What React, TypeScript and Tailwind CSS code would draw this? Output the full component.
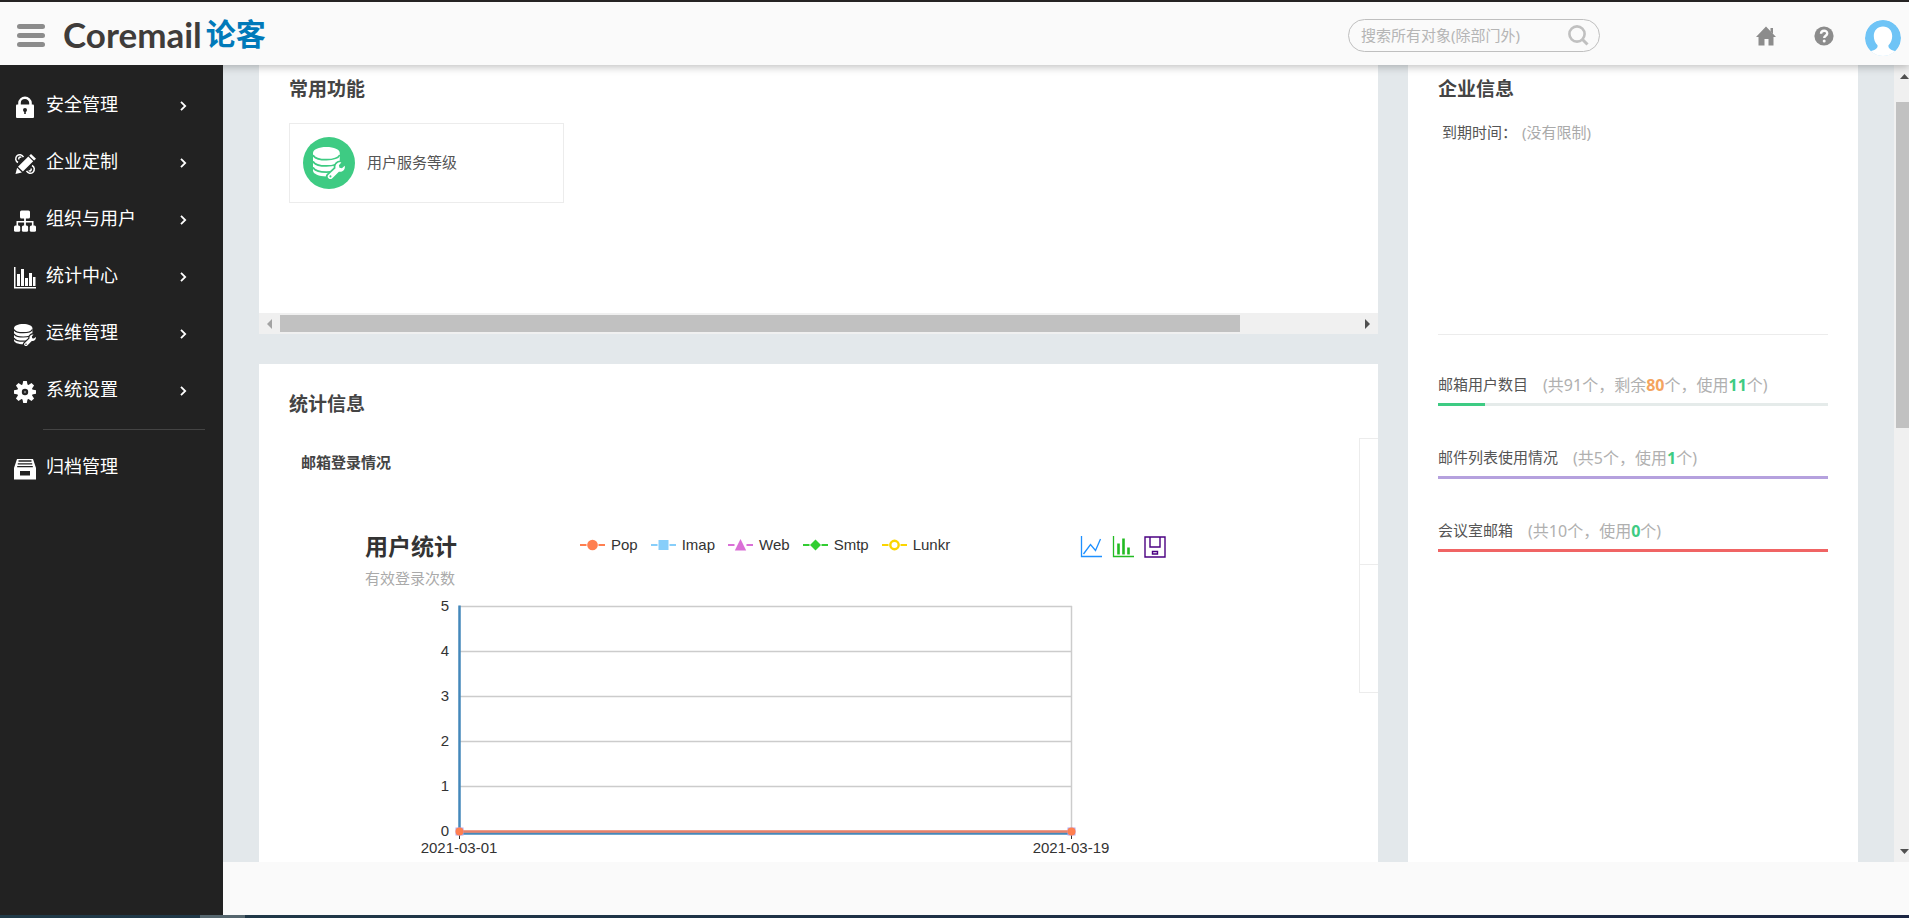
import type { ReactNode } from "react";

function LockIcon() {
  return (
    <svg viewBox="0 0 22 22" className="size-[22px]" fill="none">
      <path d="M5.500 9V7a5.500 5.200 0 0 1 11 0v2" stroke="#fff" strokeWidth="2.600" />
      <rect x="2" y="8.500" width="18" height="13.500" rx="1" fill="#fff" />
      <circle cx="11" cy="14" r="2" fill="#222" />
      <path d="M10.200 14.500h1.600V18h-1.600z" fill="#222" />
    </svg>
  );
}

function DesignIcon() {
  return (
    <svg viewBox="0 0 22 22" className="size-[22px]" fill="none">
      <path d="M9.500 4.200C8 1.500 5 1 3 2.800 1 5 1.300 8 4 9.500M5 6.500c-.8-1.800.8-3 2.300-2" stroke="#fff" strokeWidth="1.500" />
      <path d="M12.500 17.800c1.500 2.700 4.500 3.200 6.500 1.400 2-2.200 1.700-5.200-1-6.700M17 15.500c.8 1.800-.8 3-2.300 2" stroke="#fff" strokeWidth="1.500" />
      <path d="M1.500 21l1.600-6.300 4.800 4.700zM4 13.800L14.300 3.500l4.900 4.800L8.900 18.600zM15.200 2.700L17 1l5 4.800-1.900 1.700z" fill="#fff" />
    </svg>
  );
}

function OrgIcon() {
  return (
    <svg viewBox="0 0 22 22" className="size-[22px]" fill="#fff">
      <rect x="6" y="0.500" width="10" height="8" rx="1.500" />
      <path d="M2.500 16v-5h7.600V8h1.800v3h7.600v5h-1.600v-3.400h-6V16h-1.800v-3.400h-6V16z" />
      <rect x="0" y="15.500" width="6.200" height="6.200" rx="1.500" />
      <rect x="7.900" y="15.500" width="6.200" height="6.200" rx="1.500" />
      <rect x="15.800" y="15.500" width="6.200" height="6.200" rx="1.500" />
    </svg>
  );
}

function StatsIcon() {
  return (
    <svg viewBox="0 0 22 22" className="size-[22px]" fill="#fff">
      <path d="M0 0h1.500v20H22v1.500H0z" />
      <path d="M3 7h3v12H3zM7 2h3v17H7zM11 11h3v8h-3zM15 6h3v13h-3zM19 10h2.500v9H19z" />
    </svg>
  );
}

function DatabaseIcon({ cut, className }: { cut: string; className: string }) {
  return (
    <svg viewBox="0 0 22 22" className={className}>
      <path d="M0 4.200C0 1.700 4 0 9.200 0s9.200 1.700 9.200 4.200v12c0 2.400-4 4-9.200 4s-9.200-1.600-9.200-4z" fill="#fff" />
      <g stroke={cut} strokeWidth="1.200" fill="none">
        <path d="M0 5.500c1 2.200 4.600 3.200 9.200 3.200s8.200-1 9.200-3.200" />
        <path d="M0 9.800c1 2.200 4.600 3.200 9.200 3.200s8.200-1 9.200-3.200" />
        <path d="M0 14c1 2.200 4.600 3.200 9.200 3.200s8.200-1 9.200-3.200" />
      </g>
      <path
        d="M10.500 19.200l5-4.600c-.5-2.400 1.400-4.400 4-4l-1.700 2 .4 1.600 1.700.4 1.900-1.700c.6 2.600-1.500 4.600-4 4.100l-4.700 4.700c-1.700 1.300-4-.8-2.600-2.500z"
        fill="#fff"
        stroke={cut}
        strokeWidth="2.400"
        paintOrder="stroke"
      />
      <circle cx="12" cy="20.200" r="0.700" fill={cut} />
    </svg>
  );
}

function GearIcon() {
  return (
    <svg viewBox="0 0 22 22" className="size-[22px]">
      <g fill="#fff">
        <circle cx="11" cy="11" r="7.800" />
        {[0, 45, 90, 135].map((a) => (
          <path key={a} d="M9.200 0h3.600l.8 4v14l-.8 4H9.200l-.8-4V4z" transform={`rotate(${a} 11 11)`} />
        ))}
      </g>
      <circle cx="11" cy="11" r="3.200" fill="#222" />
      <circle cx="11" cy="11" r="1.200" fill="#777" />
    </svg>
  );
}

function ArchiveIcon() {
  return (
    <svg viewBox="0 0 22 22" className="size-[22px]">
      <path d="M3 1h16l3 9v11.500H0V10z" fill="#fff" />
      <path d="M4.500 3h13M3.800 5.800h14.400M3.200 8.600h15.600" stroke="#222" strokeWidth="1.300" />
      <rect x="6" y="13" width="10" height="4.500" fill="#222" />
    </svg>
  );
}

const menu: { label: string; icon: ReactNode }[] = [
  { label: "安全管理", icon: <LockIcon /> },
  { label: "企业定制", icon: <DesignIcon /> },
  { label: "组织与用户", icon: <OrgIcon /> },
  { label: "统计中心", icon: <StatsIcon /> },
  { label: "运维管理", icon: <DatabaseIcon cut="#222" className="size-[22px]" /> },
  { label: "系统设置", icon: <GearIcon /> },
];

function MenuItem({ label, icon, arrow }: { label: string; icon: ReactNode; arrow?: boolean }) {
  return (
    <li>
      <a href="#" className="flex h-[57px] items-center pr-9 pl-[14px] text-[18px] leading-6 text-white">
        <span className="mr-[10px] pt-1">{icon}</span>
        <span className="flex-1 pb-[2px]">{label}</span>
        {arrow && (
          <svg viewBox="0 0 7 10" className="mt-[2px] h-[10px] w-[7px]" fill="none">
            <path d="M1 0.800l4.200 4.200L1 9.200" stroke="#fff" strokeWidth="1.800" />
          </svg>
        )}
      </a>
    </li>
  );
}

function Header() {
  return (
    <header className="relative z-10 flex h-[65px] shrink-0 items-center border-t-2 border-[#252323] bg-[#fafafa] pt-1 pr-[8px] pl-[17px] shadow-[0_2px_8px_rgba(0,0,0,0.25)]">
      <button type="button" aria-label="菜单" className="flex flex-col gap-1">
        <span className="h-[5px] w-7 rounded-sm bg-[#8c8c8c]" />
        <span className="h-[5px] w-7 rounded-sm bg-[#8c8c8c]" />
        <span className="h-[5px] w-7 rounded-sm bg-[#8c8c8c]" />
      </button>
      <a href="#" className="ml-[18px] flex items-center gap-1 pb-1 leading-10">
        <span className="font-[Lato] text-[35px] font-bold text-[#3f3c3a]">Coremail</span>
        <span className="text-[30px] font-semibold text-[#0079b9]">论客</span>
      </a>
      <form className="mr-[156px] ml-auto flex h-[33px] w-[252px] items-center rounded-full border border-[#bfbfbf] pr-[10px] pl-3">
        <input
          type="text"
          aria-label="搜索"
          placeholder="搜索所有对象(除部门外)"
          className="min-w-0 flex-1 bg-transparent text-[15px] outline-none placeholder:text-[#b5b5b5]"
        />
        <button type="button" aria-label="搜索">
          <svg viewBox="0 0 21 21" className="size-[21px]" fill="none" stroke="#c0c0c0">
            <circle cx="9" cy="9" r="7.600" strokeWidth="2.600" />
            <path d="M14.500 14.500l5 5" strokeWidth="3" />
          </svg>
        </button>
      </form>
      <a href="#" aria-label="首页" className="mr-[38px]">
        <svg viewBox="0 0 20 20" className="size-5" fill="#8c8c8c">
          <path d="M10 0.500L20 11h-2.500v8.500h-5V13h-4v6.500h-6V11H0z" />
          <path d="M14.500 2H17v6l-2.500-2.600z" />
        </svg>
      </a>
      <a href="#" aria-label="帮助" className="mr-[31px]">
        <svg viewBox="0 0 20 20" className="size-5">
          <circle cx="10" cy="10" r="9.600" fill="#8c8c8c" />
          <path d="M7 7.800c0-4 6.200-4 6.200-.4 0 2.300-3 2.300-3 4.700" fill="none" stroke="#fafafa" strokeWidth="2.400" />
          <circle cx="10.200" cy="14.900" r="1.500" fill="#fafafa" />
        </svg>
      </a>
      <button type="button" aria-label="账户" className="mt-1 size-9 overflow-hidden rounded-full">
        <svg viewBox="0 0 36 36" className="size-9">
          <circle cx="18" cy="18" r="18" fill="#6fc4f6" />
          <path d="M18 6.500c5.500 0 9.200 4 9.200 9.500 0 3.500-1.200 7-3.700 9.200-.6 3 2 4.800 8.500 6.500L28 37H8l-4-5.300c6.500-1.700 9.100-3.500 8.500-6.500C10 23 8.800 19.500 8.800 16c0-5.500 3.700-9.500 9.200-9.500z" fill="#fff" />
        </svg>
      </button>
    </header>
  );
}

function HorizontalScrollbar() {
  return (
    <div className="flex h-[21px] items-center bg-[#f0f0f0] pr-2 pl-2">
      <svg viewBox="0 0 5 10" className="h-[10px] w-[5px]">
        <path d="M5 0v10L0 5z" fill="#a3a3a3" />
      </svg>
      <div className="mr-auto ml-2 h-[17px] w-[87%] bg-[#c1c1c1]" />
      <svg viewBox="0 0 5 10" className="h-[10px] w-[5px]">
        <path d="M0 0v10l5-5z" fill="#505050" />
      </svg>
    </div>
  );
}

const series: { name: string; color: string; shape: ReactNode }[] = [
  { name: "Pop", color: "#ff7f50", shape: <circle cx="12.500" cy="7" r="5.300" fill="#ff7f50" /> },
  { name: "Imap", color: "#87cefa", shape: <rect x="7.500" y="2" width="10" height="10" fill="#87cefa" /> },
  { name: "Web", color: "#da70d6", shape: <path d="M12.500 1l5.700 11.500H6.800z" fill="#da70d6" /> },
  { name: "Smtp", color: "#32cd32", shape: <path d="M12.500 1.500l5.500 5.500-5.500 5.500L7 7z" fill="#32cd32" /> },
  { name: "Lunkr", color: "#fbd500", shape: <circle cx="12.500" cy="7" r="4.200" fill="#fff" stroke="#fbd500" strokeWidth="2.400" /> },
];

function Legend() {
  return (
    <ul className="flex h-[26px] items-center gap-[13px]">
      {series.map((s) => (
        <li key={s.name} className="flex items-center gap-[6px] font-['Liberation_Sans',sans-serif] text-[15px] leading-5 text-[#333]">
          <svg viewBox="0 0 25 14" className="h-[14px] w-[25px]">
            <path d="M0 7h6.500M18.500 7H25" stroke={s.color} strokeWidth="2" />
            {s.shape}
          </svg>
          {s.name}
        </li>
      ))}
    </ul>
  );
}

function ChartTools() {
  return (
    <div className="ml-auto flex h-[30px] items-center gap-[10px] pr-[1px]">
      <button type="button" aria-label="折线图">
        <svg viewBox="0 0 22 22" className="size-[22px]" fill="none" stroke="#1e90ff">
          <path d="M1.500 0v20.500H22" strokeWidth="1.300" />
          <path d="M3.500 18l7-9.500 5 6L20.500 3" strokeWidth="1.300" />
        </svg>
      </button>
      <button type="button" aria-label="柱状图">
        <svg viewBox="0 0 22 22" className="size-[22px]" fill="none" stroke="#22bb22">
          <path d="M1.500 0v20.500H22" strokeWidth="1.300" />
          <path d="M6.500 7.500v11M11.500 2.500v16M16.500 11.500v7" strokeWidth="2.600" />
        </svg>
      </button>
      <button type="button" aria-label="保存为图片">
        <svg viewBox="0 0 22 22" className="size-[22px]" fill="none" stroke="#4b0082" strokeWidth="1.400">
          <path d="M1 1h20v20H1zM6 1v10h10V1" />
          <path d="M8.500 15.500h5v2.500h-5z" />
        </svg>
      </button>
    </div>
  );
}

function Plot() {
  return (
    <svg viewBox="0 0 802 270" className="mt-1 h-[270px] w-[802px] font-['Liberation_Sans',sans-serif] text-[15px]">
      {[0, 1, 2, 3, 4, 5].map((n) => (
        <g key={n}>
          <path d={`M94 ${239.5 - n * 45}H707`} stroke="#ccc" strokeWidth="1.500" />
          <text x="84" y={244 - n * 45} textAnchor="end" fill="#333">
            {n}
          </text>
        </g>
      ))}
      <path d="M706.500 14v226" stroke="#ccc" strokeWidth="1.500" />
      <path d="M94.500 240v7M706.500 240v7" stroke="#333" />
      <path d="M94.500 13.500V241.500H707" fill="none" stroke="#4488bb" strokeWidth="2.500" />
      <path d="M94.500 239.500H706.500" stroke="#e8806a" strokeWidth="2.500" />
      {[94.5, 706.5].map((x) => (
        <g key={x}>
          <rect x={x - 4} y="235.500" width="8" height="8" fill="#b3a8ee" />
          <circle cx={x} cy="239.500" r="4" fill="#ff7f50" />
        </g>
      ))}
      <text x="94" y="261" textAnchor="middle" fill="#333">
        2021-03-01
      </text>
      <text x="706" y="261" textAnchor="middle" fill="#333">
        2021-03-19
      </text>
    </svg>
  );
}

const quotas = [
  { label: "邮箱用户数目", total: 91, left: 80, used: 11, percent: 12, bar: "bg-[#3ecb83]" },
  { label: "邮件列表使用情况", total: 5, used: 1, percent: 100, bar: "bg-[#b5a1de]" },
  { label: "会议室邮箱", total: 10, used: 0, percent: 100, bar: "bg-[#f06464]" },
];

function CompanyPanel() {
  return (
    <section className="w-[450px] shrink-0 bg-white px-[30px] pt-[11px]">
      <h2 className="text-[19px] leading-[26px] font-bold text-[#444]">企业信息</h2>
      <dl className="mt-[18px] flex h-[215px] border-b border-[#ececec] pl-1 text-[15px] leading-6">
        <dt className="w-20 text-[#555]">到期时间：</dt>
        <dd className="text-[#aaa]">(没有限制)</dd>
      </dl>
      <ul className="mt-[38px] flex flex-col gap-10">
        {quotas.map((q) => (
          <li key={q.label}>
            <p className="flex h-[27px] items-center pb-1 text-[15px] text-[#555]">
              {q.label}
              <span className="ml-[15px] text-base text-[#b0b0b0]">
                (共{q.total}个，
                {q.left !== undefined && (
                  <>
                    剩余<b className="text-[#f4a460]">{q.left}</b>个，
                  </>
                )}
                使用<b className="text-[#3ecb83]">{q.used}</b>个)
              </span>
            </p>
            <div className="mt-[3px] h-[3px] bg-[#e5ebea]">
              <div className={`h-full ${q.bar}`} style={{ width: `${q.percent}%` }} />
            </div>
          </li>
        ))}
      </ul>
    </section>
  );
}

export default function App() {
  return (
    <div className="flex h-screen flex-col overflow-hidden bg-[#fafafa] font-['Noto_Sans','Noto_Sans_CJK_SC',sans-serif]">
      <Header />
      <div className="flex min-h-0 flex-1">
        <nav className="relative z-20 w-[223px] shrink-0 bg-[#222] pt-[11px]">
          <ul>
            {menu.map((m) => (
              <MenuItem key={m.label} label={m.label} icon={m.icon} arrow />
            ))}
          </ul>
          <hr className="mt-[11px] mr-[18px] mb-2 ml-[43px] border-[#444]" />
          <ul>
            <MenuItem label="归档管理" icon={<ArchiveIcon />} />
          </ul>
        </nav>
        <div className="flex min-w-0 flex-1 flex-col">
          <main className="flex min-h-0 flex-1 overflow-hidden bg-[#e3e8eb] pl-9">
            <div className="mr-[30px] flex min-w-0 flex-1 flex-col gap-[30px]">
              <section className="shrink-0 bg-white">
                <div className="h-[248px] px-[30px] pt-[11px]">
                  <h2 className="text-[19px] leading-[26px] font-bold text-[#444]">常用功能</h2>
                  <a href="#" className="mt-[21px] flex h-20 w-[275px] items-center gap-3 border border-[#ececec] pl-[13px] text-[15px] text-[#555]">
                    <span className="flex size-[52px] items-center justify-center rounded-full bg-[#3ecb83]">
                      <DatabaseIcon cut="#3ecb83" className="size-8" />
                    </span>
                    <span className="pb-[2px]">用户服务等级</span>
                  </a>
                </div>
                <HorizontalScrollbar />
              </section>
              <section className="min-h-0 flex-1 overflow-hidden bg-white pt-[27px] pl-[30px]">
                <h2 className="text-[19px] leading-[26px] font-bold text-[#444]">统计信息</h2>
                <div className="mt-[21px] flex items-start pl-3">
                  <div className="flex-1">
                    <h3 className="mt-3 text-[15px] leading-6 font-semibold text-[#444]">邮箱登录情况</h3>
                    <div className="mt-[58px] ml-16 w-[802px]">
                      <div className="flex items-start">
                        <div className="w-[215px]">
                          <h4 className="text-[23px] leading-7 font-bold text-[#333]">用户统计</h4>
                          <p className="mt-2 text-[15px] leading-5 text-[#aaa]">有效登录次数</p>
                        </div>
                        <Legend />
                        <ChartTools />
                      </div>
                      <Plot />
                    </div>
                  </div>
                  <div className="w-[19px] border-y border-l border-[#ececec]">
                    <div className="h-[126px] border-b border-[#ececec]" />
                    <div className="h-[127px]" />
                  </div>
                </div>
              </section>
            </div>
            <CompanyPanel />
            <div className="ml-9 flex w-[15px] shrink-0 flex-col bg-[#f0f0f0] pt-[9px] pb-2">
              <svg viewBox="0 0 9 5" className="ml-[6px] h-[5px] w-[9px]">
                <path d="M0 5h9L4.500 0z" fill="#505050" />
              </svg>
              <div className="mt-[23px] ml-[2px] h-[326px] bg-[#c1c1c1]" />
              <svg viewBox="0 0 9 5" className="mt-auto ml-[6px] h-[5px] w-[9px]">
                <path d="M0 0h9L4.500 5z" fill="#505050" />
              </svg>
            </div>
          </main>
          <footer className="h-[53px] shrink-0" />
        </div>
      </div>
      <div className="flex h-[3px] shrink-0 bg-linear-to-r from-[#203a48] to-[#1b2643]">
        <div className="ml-[200px] w-[45px] bg-[#55666e]" />
      </div>
    </div>
  );
}
